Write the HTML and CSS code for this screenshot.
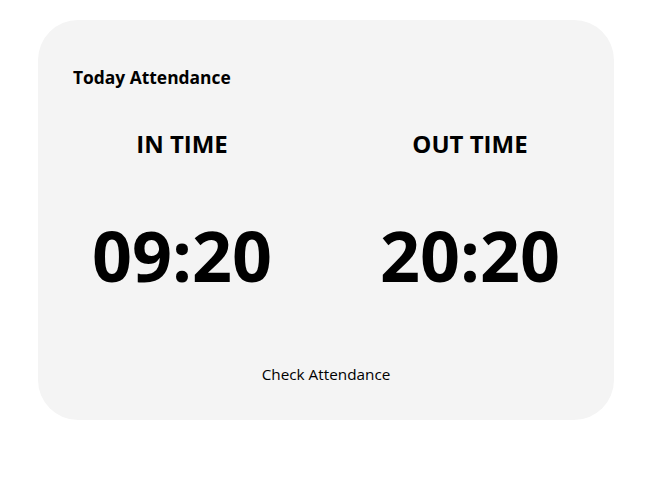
FILE: index.html
```html
<!DOCTYPE html>
<html>
<head>
<meta charset="utf-8">
<link rel="stylesheet" href="styles.css">
</head>
<body>
<div class="card">
  <div class="title">Today Attendance</div>
  <div class="cols">
    <div class="col">
      <div class="label">IN TIME</div>
      <div class="time">09:20</div>
    </div>
    <div class="col">
      <div class="label">OUT TIME</div>
      <div class="time">20:20</div>
    </div>
  </div>
  <div class="link">Check Attendance</div>
</div>
</body>
</html>
```
FILE: styles.css
```css
html, body { margin: 0; padding: 0; background: #ffffff; }
body {
  font-family: "Open Sans", "Noto Sans", sans-serif;
  color: #000;
  padding: 20px 0 0 38px;
}
.card {
  width: 576px;
  height: 400px;
  box-sizing: border-box;
  background: #f4f4f4;
  border-radius: 40px;
  padding-top: 45px;
}
.title {
  font-size: 17.4px;
  line-height: 24px;
  font-weight: 700;
  padding-left: 35px;
}
.cols {
  display: grid;
  grid-template-columns: 1fr 1fr;
  margin-top: 38px;
}
.col { text-align: center; }
.label {
  font-size: 24px;
  line-height: 34px;
  font-weight: 700;
}
.time {
  margin-top: 54px;
  font-size: 70px;
  line-height: 80px;
  font-weight: 700;
}
.link {
  margin-top: 68px;
  text-align: center;
  font-size: 15.3px;
  line-height: 22px;
}
```
